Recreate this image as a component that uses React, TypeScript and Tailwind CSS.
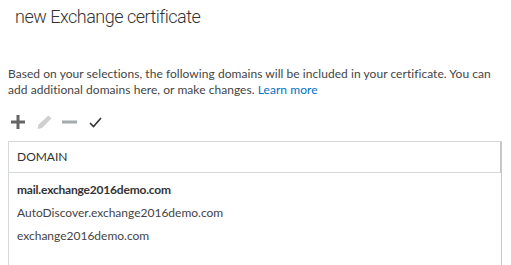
import { useState } from 'react'

const domains = [
  { name: 'mail.exchange2016demo.com', bold: true },
  { name: 'AutoDiscover.exchange2016demo.com', bold: false },
  { name: 'exchange2016demo.com', bold: false },
]

function PlusIcon() {
  return (
    <svg width="16" height="14" viewBox="0 0 16 14">
      <path d="M8 0v14M1 7h14" stroke="#666" strokeWidth="3" fill="none" />
    </svg>
  )
}

function PencilIcon() {
  return (
    <svg width="16" height="14" viewBox="0 0 16 14">
      <path d="M12.5 0.5l3 3-9.5 9.5-4.5 1 1-4.5z" fill="#cfcfcf" />
    </svg>
  )
}

function MinusIcon() {
  return (
    <svg width="15" height="14" viewBox="0 0 15 14">
      <path d="M0 7h15" stroke="#a3abae" strokeWidth="3" fill="none" />
    </svg>
  )
}

function CheckIcon() {
  return (
    <svg width="13" height="14" viewBox="0 0 13 14">
      <path d="M1 8l3.5 3.5L12 3" stroke="#333" strokeWidth="1.6" fill="none" />
    </svg>
  )
}

export default function App() {
  const [selected] = useState<number | null>(null)

  return (
    <div
      className="w-[511px] h-[265px] bg-white overflow-hidden text-[#444]"
      style={{ fontFamily: 'Lato, "Liberation Sans", sans-serif' }}
    >
      <h1
        className="pl-[15px] pt-[5px] text-[18px] leading-[24px] font-light tracking-[-0.5px] text-[#333]"
        style={{ fontFamily: 'Roboto, "Liberation Sans", sans-serif' }}
      >
        new Exchange certificate
      </h1>

      <p className="mt-[37px] px-[8px] text-[12px] leading-[16px] tracking-[0.05px]">
        Based on your selections, the following domains will be included in your certificate. You can
        add additional domains here, or make changes.{' '}
        <a href="#" className="text-[#0072c6]">Learn more</a>
      </p>

      {/* toolbar */}
      <div className="mt-[17px] ml-[10px] flex items-center h-[14px]">
        <button className="mr-[10px]"><PlusIcon /></button>
        <button className="mr-[10px]"><PencilIcon /></button>
        <button className="mr-[12px]"><MinusIcon /></button>
        <button><CheckIcon /></button>
      </div>

      {/* domain list */}
      <div className="mt-[12px] ml-[8px] w-[494px] h-[200px] border border-[#d5d8da] border-r-[#c4c8ca]">
        <div className="h-[31px] flex items-center pl-[8px] text-[12px] text-[#333] border-b border-[#d5d8da] border-r border-r-[#c4c8ca]">
          DOMAIN
        </div>
        <div className="pt-[5px]">
          {domains.map((d, i) => (
            <div
              key={d.name}
              className={`h-[23px] flex items-center pl-[8px] text-[12px] ${d.bold ? 'font-bold tracking-[-0.2px] text-[#333]' : 'text-[#444]'} ${selected === i ? 'bg-[#cce8ff]' : ''}`}
            >
              {d.name}
            </div>
          ))}
        </div>
      </div>
    </div>
  )
}
